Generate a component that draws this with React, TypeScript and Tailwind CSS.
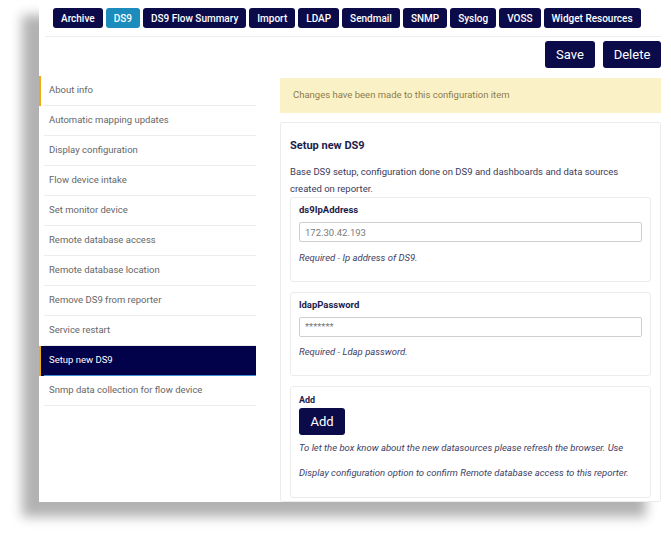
import React from 'react';

const tabs = ['Archive', 'DS9', 'DS9 Flow Summary', 'Import', 'LDAP', 'Sendmail', 'SNMP', 'Syslog', 'VOSS', 'Widget Resources'];

const menu = [
  'About info',
  'Automatic mapping updates',
  'Display configuration',
  'Flow device intake',
  'Set monitor device',
  'Remote database access',
  'Remote database location',
  'Remove DS9 from reporter',
  'Service restart',
  'Setup new DS9',
  'Snmp data collection for flow device',
];

const Field = ({ label, value, help }: { label: string; value: string; help: string }) => (
  <div className="border border-[#ececec] rounded-[3px] pt-[5px] pb-[16px] pl-[8px] pr-[8px]">
    <div className="text-[9.5px] leading-[14px] font-bold text-[#1c1c4c]">{label}</div>
    <input
      readOnly
      value={value}
      className="mt-[5px] w-full h-[20px] border border-[#cfcfcf] rounded-[2px] px-[5px] text-[9.5px] text-[#7a7a7a] outline-none"
    />
    <div className="mt-[8px] text-[9.5px] leading-[14px] italic text-[#3e3e66]">{help}</div>
  </div>
);

export default function App() {
  return (
    <div className="w-[671px] h-[538px] bg-white overflow-hidden font-['Roboto',sans-serif]">
      <div className="ml-[39px] w-[624px] h-[502px] bg-white shadow-[-17px_15px_11px_rgba(0,0,0,0.3)] flex flex-col overflow-hidden pr-[2px]">
        {/* tab bar */}
        <div className="ml-[6px] pl-[8px] pt-[8px] pb-[8px] border-b border-[#eeeeee] flex gap-[3px]">
          {tabs.map((t) => (
            <div
              key={t}
              className={`h-[20px] px-[8px] flex items-center rounded-[3px] text-[10px] font-medium text-white ${
                t === 'DS9' ? 'bg-[#1b8cbc]' : 'bg-[#0b0b4a]'
              }`}
            >
              {t}
            </div>
          ))}
        </div>

        {/* actions */}
        <div className="flex justify-end gap-[8px] mt-[4px]">
          <button className="h-[27px] w-[50px] rounded-[3px] bg-[#0b0b4a] text-white text-[13px]">Save</button>
          <button className="h-[27px] w-[58px] rounded-[3px] bg-[#0b0b4a] text-white text-[13px]">Delete</button>
        </div>

        <div className="flex gap-[24px] mt-[8px] flex-1">
          {/* sidebar */}
          <div className="w-[217px] shrink-0">
            {menu.map((m, i) => {
              const active = m === 'Setup new DS9';
              const marked = i === 0 || active;
              return (
                <div
                  key={m}
                  className={`border-l-2 ${marked ? 'border-[#f2a90d]' : 'border-transparent'} ${
                    active ? 'bg-[#02024a]' : ''
                  }`}
                >
                  <div
                    className={`ml-[3px] h-[30px] pl-[5px] flex items-center border-b text-[9.5px] ${
                      active ? 'border-[#3f8fd6] text-white' : 'border-[#ececec] text-[#666666]'
                    }`}
                  >
                    {m}
                  </div>
                </div>
              );
            })}
          </div>

          {/* main */}
          <div className="flex-1 mt-[2px] flex flex-col">
            <div className="h-[35px] bg-[#fbf1c7] pl-[13px] flex items-center text-[9.5px] text-[#8c7c4c]">
              Changes have been made to this configuration item
            </div>
            <div className="mt-[9px] flex-1 border border-[#ececec] rounded-[2px] px-[9px] pt-[15px]">
              <div className="text-[11px] leading-[16px] font-bold text-[#1c1c4c]">Setup new DS9</div>
              <p className="mt-[9px] text-[9.5px] leading-[17px] text-[#3a3a5c]">
                Base DS9 setup, configuration done on DS9 and dashboards and data sources created on reporter.
              </p>
              <div className="flex flex-col gap-[10px]">
                <Field label="ds9IpAddress" value="172.30.42.193" help="Required - Ip address of DS9." />
                <Field label="ldapPassword" value="*******" help="Required - Ldap password." />
                <div className="border border-[#ececec] rounded-[3px] pt-[6px] pb-[17px] px-[8px]">
                  <div className="text-[9px] leading-[14px] font-bold text-[#1c1c4c]">Add</div>
                  <button className="mt-[1px] h-[27px] w-[46px] rounded-[3px] bg-[#0b0b4a] text-white text-[13px]">
                    Add
                  </button>
                  <div className="mt-[6px] text-[9.5px] leading-[14px] italic text-[#3e3e66]">
                    To let the box know about the new datasources please refresh the browser. Use
                  </div>
                  <div className="mt-[11px] text-[9.5px] leading-[14px] italic text-[#3e3e66]">
                    Display configuration option to confirm Remote database access to this reporter.
                  </div>
                </div>
              </div>
            </div>
          </div>
        </div>
      </div>
    </div>
  );
}
